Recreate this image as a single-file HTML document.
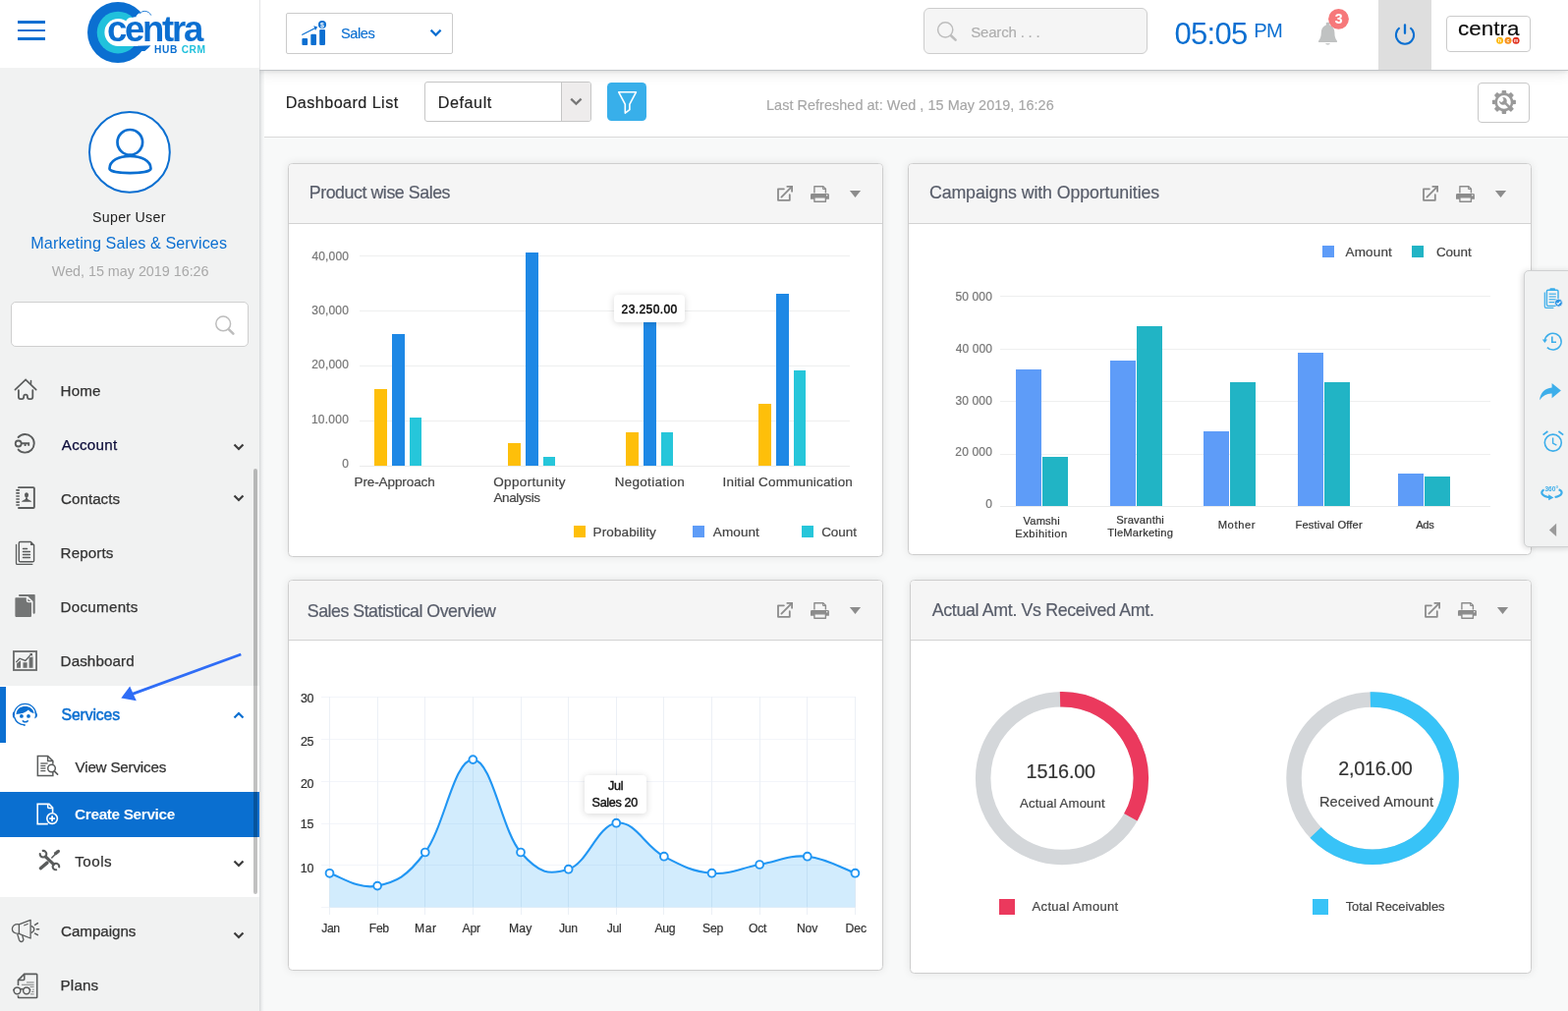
<!DOCTYPE html>
<html lang="en">
<head>
<meta charset="utf-8">
<title>CentraHub CRM - Dashboard</title>
<style>
html,body{margin:0;padding:0}
body{width:1596px;height:1029px;overflow:hidden;position:relative;background:#f8f9f9;font-family:"Liberation Sans",sans-serif}
.b,.t,.s{position:absolute;display:block}
.t{white-space:nowrap;line-height:1;margin:0;padding:0}
.s{overflow:visible}
#app{position:absolute;left:0;top:0;width:1596px;height:1029px;will-change:transform}
</style>
</head>
<body>
<div id="app">
<main id="content">
<section class="card" aria-label="Product wise Sales">
<div class="b" style="left:293px;top:166px;width:606px;height:401px;background:#fff;border:1px solid #cecece;border-radius:4.5px;box-sizing:border-box;box-shadow:0 0 8px rgba(0,0,0,.085)"></div>
<div class="b" style="left:294px;top:167px;width:604px;height:60px;background:#f5f5f5;border-bottom:1px solid #d3d3d3;border-radius:3.5px 3.5px 0 0"></div>
<div class="t" style="left:314.78px;top:188px;font-size:17.8px;color:#585d6a;letter-spacing:-0.44px;-webkit-text-stroke:.2px #585d6a;">Product wise Sales</div>
<svg class="s" style="left:786px;top:184px;" width="96" height="26" viewBox="786 184 96 26"><path d="M797.9 192.3 H792 V203.8 H803.8 V198.2" fill="none" stroke="#8c8c8c" stroke-width="1.8" stroke-linecap="round" stroke-linejoin="round"/><path d="M795.4 200.6 L805.8 190.2" fill="none" stroke="#8c8c8c" stroke-width="1.8" stroke-linecap="round"/><path d="M800.6 189.9 H806.1 V195.4" fill="none" stroke="#8c8c8c" stroke-width="1.8" stroke-linejoin="miter"/><path d="M828.9 196.6 V189.7 H837.8 L840.4 192.3 V196.6" fill="#f5f5f5" stroke="#8c8c8c" stroke-width="1.4" stroke-linejoin="round"/><path d="M837.6 189.9 V192.5 H840.2" fill="none" stroke="#8c8c8c" stroke-width="1"/><path d="M826.4 196.9 H842.5 Q843.9 196.9 843.9 198.3 V202.8 H825 V198.3 Q825 196.9 826.4 196.9 Z" fill="#8c8c8c"/><rect x="828.9" y="200.9" width="11.5" height="4.4" fill="#f5f5f5" stroke="#8c8c8c" stroke-width="1.4" stroke-linejoin="round"/><circle cx="841.7" cy="198.7" r=".75" fill="#f5f5f5"/><path d="M864.9 194 H876.1 L870.5 201.1 Z" fill="#8c8c8c"/></svg>
<svg class="s" style="left:300px;top:240px;" width="590" height="250" viewBox="300 240 590 250"><path d="M366 260.5 H865" stroke="#eeefef" stroke-width="1"/><path d="M366 316.5 H865" stroke="#eeefef" stroke-width="1"/><path d="M366 372.5 H865" stroke="#eeefef" stroke-width="1"/><path d="M366 428.5 H865" stroke="#eeefef" stroke-width="1"/><path d="M366 474.5 H865" stroke="#eaebeb" stroke-width="1"/><rect x="381" y="396" width="13" height="78" fill="#febf0a"/><rect x="399" y="340" width="13" height="134" fill="#1e88e5"/><rect x="417" y="425" width="12" height="49" fill="#26c6da"/><rect x="517" y="451" width="13" height="23" fill="#febf0a"/><rect x="535" y="257" width="13" height="217" fill="#1e88e5"/><rect x="553" y="465" width="12" height="9" fill="#26c6da"/><rect x="637" y="440" width="13" height="34" fill="#febf0a"/><rect x="655" y="322" width="13" height="152" fill="#1e88e5"/><rect x="673" y="440" width="12" height="34" fill="#26c6da"/><rect x="772" y="411" width="13" height="63" fill="#febf0a"/><rect x="790" y="299" width="13" height="175" fill="#1e88e5"/><rect x="808" y="377" width="12" height="97" fill="#26c6da"/></svg>
<div class="t" style="left:317.53px;top:255px;font-size:12px;color:#767676;letter-spacing:0.13px;-webkit-text-stroke:0.2px #767676;">40,000</div>
<div class="t" style="left:317.35px;top:310px;font-size:12px;color:#767676;letter-spacing:0.16px;-webkit-text-stroke:0.2px #767676;">30,000</div>
<div class="t" style="left:317.2px;top:365px;font-size:12px;color:#767676;letter-spacing:0.19px;-webkit-text-stroke:0.2px #767676;">20,000</div>
<div class="t" style="left:316.9px;top:421px;font-size:12px;color:#767676;letter-spacing:0.25px;-webkit-text-stroke:0.2px #767676;">10.000</div>
<div class="t" style="left:348.19px;top:466px;font-size:12px;color:#767676;-webkit-text-stroke:0.2px #767676;">0</div>
<div class="t" style="left:360.52px;top:484px;font-size:13.5px;color:#444;letter-spacing:-0.1px;-webkit-text-stroke:0.2px #444;">Pre-Approach</div>
<div class="t" style="left:502.19px;top:484px;font-size:13.5px;color:#444;letter-spacing:0.36px;-webkit-text-stroke:0.2px #444;">Opportunity</div>
<div class="t" style="left:502.48px;top:500px;font-size:13.5px;color:#444;letter-spacing:-0.38px;-webkit-text-stroke:0.2px #444;">Analysis</div>
<div class="t" style="left:625.72px;top:484px;font-size:13.5px;color:#444;letter-spacing:0.28px;-webkit-text-stroke:0.2px #444;">Negotiation</div>
<div class="t" style="left:735.59px;top:484px;font-size:13.5px;color:#444;letter-spacing:0.16px;-webkit-text-stroke:0.2px #444;">Initial Communication</div>
<div class="b" style="left:625px;top:300px;width:72px;height:28px;background:#fff;border-radius:4px;box-shadow:0 1px 7px rgba(0,0,0,.16)"></div>
<div class="t" style="left:632.6px;top:309px;font-size:12px;color:#050505;letter-spacing:0.41px;-webkit-text-stroke:.45px #050505;">23.250.00</div>
<div class="b" style="left:584px;top:535.2px;width:11.8px;height:11.8px;background:#febf0a"></div>
<div class="t" style="left:603.52px;top:535px;font-size:13.5px;color:#444;letter-spacing:0.12px;-webkit-text-stroke:0.2px #444;">Probability</div>
<div class="b" style="left:705px;top:535.2px;width:11.8px;height:11.8px;background:#5e9cf7"></div>
<div class="t" style="left:725.8px;top:535px;font-size:13.5px;color:#444;letter-spacing:0.11px;-webkit-text-stroke:0.2px #444;">Amount</div>
<div class="b" style="left:816px;top:535.2px;width:11.8px;height:11.8px;background:#26c6da"></div>
<div class="t" style="left:836.13px;top:535px;font-size:13.5px;color:#444;letter-spacing:-0.02px;-webkit-text-stroke:0.2px #444;">Count</div>
</section>
<section class="card" aria-label="Campaigns with Opportunities">
<div class="b" style="left:924px;top:166px;width:635px;height:399px;background:#fff;border:1px solid #cecece;border-radius:4.5px;box-sizing:border-box;box-shadow:0 0 8px rgba(0,0,0,.085)"></div>
<div class="b" style="left:925px;top:167px;width:633px;height:60px;background:#f5f5f5;border-bottom:1px solid #d3d3d3;border-radius:3.5px 3.5px 0 0"></div>
<div class="t" style="left:945.91px;top:188px;font-size:17.8px;color:#585d6a;letter-spacing:-0.11px;-webkit-text-stroke:.2px #585d6a;">Campaigns with Opportunities</div>
<svg class="s" style="left:1443px;top:184px;" width="96" height="26" viewBox="786 184 96 26"><path d="M797.9 192.3 H792 V203.8 H803.8 V198.2" fill="none" stroke="#8c8c8c" stroke-width="1.8" stroke-linecap="round" stroke-linejoin="round"/><path d="M795.4 200.6 L805.8 190.2" fill="none" stroke="#8c8c8c" stroke-width="1.8" stroke-linecap="round"/><path d="M800.6 189.9 H806.1 V195.4" fill="none" stroke="#8c8c8c" stroke-width="1.8" stroke-linejoin="miter"/><path d="M828.9 196.6 V189.7 H837.8 L840.4 192.3 V196.6" fill="#f5f5f5" stroke="#8c8c8c" stroke-width="1.4" stroke-linejoin="round"/><path d="M837.6 189.9 V192.5 H840.2" fill="none" stroke="#8c8c8c" stroke-width="1"/><path d="M826.4 196.9 H842.5 Q843.9 196.9 843.9 198.3 V202.8 H825 V198.3 Q825 196.9 826.4 196.9 Z" fill="#8c8c8c"/><rect x="828.9" y="200.9" width="11.5" height="4.4" fill="#f5f5f5" stroke="#8c8c8c" stroke-width="1.4" stroke-linejoin="round"/><circle cx="841.7" cy="198.7" r=".75" fill="#f5f5f5"/><path d="M864.9 194 H876.1 L870.5 201.1 Z" fill="#8c8c8c"/></svg>
<svg class="s" style="left:960px;top:280px;" width="580" height="250" viewBox="960 280 580 250"><path d="M1018 301.5 H1517" stroke="#eeefef" stroke-width="1"/><path d="M1018 355.5 H1517" stroke="#eeefef" stroke-width="1"/><path d="M1018 408.5 H1517" stroke="#eeefef" stroke-width="1"/><path d="M1018 462.5 H1517" stroke="#eeefef" stroke-width="1"/><path d="M1018 515.5 H1517" stroke="#eaebeb" stroke-width="1"/><rect x="1034" y="376" width="26" height="139" fill="#5e9cf8"/><rect x="1061" y="465" width="26" height="50" fill="#21b4c5"/><rect x="1130" y="367" width="26" height="148" fill="#5e9cf8"/><rect x="1157" y="332" width="26" height="183" fill="#21b4c5"/><rect x="1225" y="439" width="26" height="76" fill="#5e9cf8"/><rect x="1252" y="389" width="26" height="126" fill="#21b4c5"/><rect x="1321" y="359" width="26" height="156" fill="#5e9cf8"/><rect x="1348" y="389" width="26" height="126" fill="#21b4c5"/><rect x="1423" y="482" width="26" height="33" fill="#5e9cf8"/><rect x="1450" y="485" width="26" height="30" fill="#21b4c5"/></svg>
<div class="t" style="left:972.42px;top:296px;font-size:12px;color:#767676;letter-spacing:0.15px;-webkit-text-stroke:0.2px #767676;">50 000</div>
<div class="t" style="left:972.63px;top:349px;font-size:12px;color:#767676;letter-spacing:0.11px;-webkit-text-stroke:0.2px #767676;">40 000</div>
<div class="t" style="left:972.45px;top:402px;font-size:12px;color:#767676;letter-spacing:0.14px;-webkit-text-stroke:0.2px #767676;">30 000</div>
<div class="t" style="left:972.3px;top:454px;font-size:12px;color:#767676;letter-spacing:0.17px;-webkit-text-stroke:0.2px #767676;">20 000</div>
<div class="t" style="left:1003.19px;top:507px;font-size:12px;color:#767676;-webkit-text-stroke:0.2px #767676;">0</div>
<div class="t" style="left:1041.62px;top:525px;font-size:11.2px;color:#333;letter-spacing:0.11px;-webkit-text-stroke:0.2px #333;">Vamshi</div>
<div class="t" style="left:1033.2px;top:538px;font-size:11.2px;color:#333;letter-spacing:0.49px;-webkit-text-stroke:0.2px #333;">Exbihition</div>
<div class="t" style="left:1136.2px;top:524px;font-size:11.2px;color:#333;letter-spacing:0.17px;-webkit-text-stroke:0.2px #333;">Sravanthi</div>
<div class="t" style="left:1127.28px;top:537px;font-size:11.2px;color:#333;letter-spacing:0.18px;-webkit-text-stroke:0.2px #333;">TleMarketing</div>
<div class="t" style="left:1239.7px;top:529px;font-size:11.2px;color:#333;letter-spacing:0.6px;-webkit-text-stroke:0.2px #333;">Mother</div>
<div class="t" style="left:1318.45px;top:529px;font-size:11.2px;color:#333;letter-spacing:0.15px;-webkit-text-stroke:0.2px #333;">Festival Offer</div>
<div class="t" style="left:1441.15px;top:529px;font-size:11.2px;color:#333;letter-spacing:-0.3px;-webkit-text-stroke:0.2px #333;">Ads</div>
<div class="b" style="left:1346px;top:250.3px;width:11.8px;height:11.8px;background:#5e9cf8"></div>
<div class="t" style="left:1369.6px;top:250px;font-size:13.5px;color:#444;letter-spacing:0.13px;-webkit-text-stroke:0.2px #444;">Amount</div>
<div class="b" style="left:1437px;top:250.3px;width:11.8px;height:11.8px;background:#21b4c5"></div>
<div class="t" style="left:1461.92px;top:250px;font-size:13.5px;color:#444;letter-spacing:-0.04px;-webkit-text-stroke:0.2px #444;">Count</div>
</section>
<section class="card" aria-label="Sales Statistical Overview">
<div class="b" style="left:293px;top:590px;width:606px;height:398px;background:#fff;border:1px solid #cecece;border-radius:4.5px;box-sizing:border-box;box-shadow:0 0 8px rgba(0,0,0,.085)"></div>
<div class="b" style="left:294px;top:591px;width:604px;height:60px;background:#f5f5f5;border-bottom:1px solid #d3d3d3;border-radius:3.5px 3.5px 0 0"></div>
<div class="t" style="left:312.86px;top:614px;font-size:17.8px;color:#585d6a;letter-spacing:-0.5px;-webkit-text-stroke:.2px #585d6a;">Sales Statistical Overview</div>
<svg class="s" style="left:786px;top:608.3px;" width="96" height="26" viewBox="786 184 96 26"><path d="M797.9 192.3 H792 V203.8 H803.8 V198.2" fill="none" stroke="#8c8c8c" stroke-width="1.8" stroke-linecap="round" stroke-linejoin="round"/><path d="M795.4 200.6 L805.8 190.2" fill="none" stroke="#8c8c8c" stroke-width="1.8" stroke-linecap="round"/><path d="M800.6 189.9 H806.1 V195.4" fill="none" stroke="#8c8c8c" stroke-width="1.8" stroke-linejoin="miter"/><path d="M828.9 196.6 V189.7 H837.8 L840.4 192.3 V196.6" fill="#f5f5f5" stroke="#8c8c8c" stroke-width="1.4" stroke-linejoin="round"/><path d="M837.6 189.9 V192.5 H840.2" fill="none" stroke="#8c8c8c" stroke-width="1"/><path d="M826.4 196.9 H842.5 Q843.9 196.9 843.9 198.3 V202.8 H825 V198.3 Q825 196.9 826.4 196.9 Z" fill="#8c8c8c"/><rect x="828.9" y="200.9" width="11.5" height="4.4" fill="#f5f5f5" stroke="#8c8c8c" stroke-width="1.4" stroke-linejoin="round"/><circle cx="841.7" cy="198.7" r=".75" fill="#f5f5f5"/><path d="M864.9 194 H876.1 L870.5 201.1 Z" fill="#8c8c8c"/></svg>
<svg class="s" style="left:300px;top:700px;" width="590" height="240" viewBox="300 700 590 240"><path d="M327 709.5 H871" stroke="#f3f5fa" stroke-width="1"/><path d="M327 752.5 H871" stroke="#f3f5fa" stroke-width="1"/><path d="M327 795.5 H871" stroke="#f3f5fa" stroke-width="1"/><path d="M327 838.5 H871" stroke="#f3f5fa" stroke-width="1"/><path d="M327 880.5 H871" stroke="#f3f5fa" stroke-width="1"/><path d="M327 923.5 H871" stroke="#f3f5fa" stroke-width="1"/><path d="M335.5 709 V931" stroke="#ecf0f6" stroke-width="1"/><path d="M384.5 709 V931" stroke="#ecf0f6" stroke-width="1"/><path d="M432.5 709 V931" stroke="#ecf0f6" stroke-width="1"/><path d="M481.5 709 V931" stroke="#ecf0f6" stroke-width="1"/><path d="M530.5 709 V931" stroke="#ecf0f6" stroke-width="1"/><path d="M578.5 709 V931" stroke="#ecf0f6" stroke-width="1"/><path d="M627.5 709 V931" stroke="#ecf0f6" stroke-width="1"/><path d="M675.5 709 V931" stroke="#ecf0f6" stroke-width="1"/><path d="M724.5 709 V931" stroke="#ecf0f6" stroke-width="1"/><path d="M773.5 709 V931" stroke="#ecf0f6" stroke-width="1"/><path d="M821.5 709 V931" stroke="#ecf0f6" stroke-width="1"/><path d="M870.5 709 V931" stroke="#ecf0f6" stroke-width="1"/><path d="M335.5 888.8 C345.23 891.36 364.68 905.86 384.13 901.6 C403.58 897.34 413.31 893.2 432.76 867.5 C452.21 841.8 461.94 773.1 481.39 773.1 C500.84 773.1 510.57 845.18 530.02 867.5 C549.47 889.82 559.2 890.66 578.65 884.7 C598.1 878.74 607.83 840.3 627.28 837.7 C646.73 835.1 656.46 861.5 675.91 871.7 C695.36 881.9 705.09 887.04 724.54 888.7 C743.99 890.36 753.72 883.4 773.17 880 C792.62 876.6 802.35 869.96 821.8 871.7 C841.25 873.44 860.7 885.3 870.43 888.7 L870.43 923.4 L335.5 923.4 Z" fill="#1ea0f5" fill-opacity=".2"/><path d="M335.5 888.8 C345.23 891.36 364.68 905.86 384.13 901.6 C403.58 897.34 413.31 893.2 432.76 867.5 C452.21 841.8 461.94 773.1 481.39 773.1 C500.84 773.1 510.57 845.18 530.02 867.5 C549.47 889.82 559.2 890.66 578.65 884.7 C598.1 878.74 607.83 840.3 627.28 837.7 C646.73 835.1 656.46 861.5 675.91 871.7 C695.36 881.9 705.09 887.04 724.54 888.7 C743.99 890.36 753.72 883.4 773.17 880 C792.62 876.6 802.35 869.96 821.8 871.7 C841.25 873.44 860.7 885.3 870.43 888.7" fill="none" stroke="#2196f3" stroke-width="2.1"/><circle cx="335.5" cy="888.8" r="3.9" fill="#fff" stroke="#2196f3" stroke-width="1.9"/><circle cx="384.13" cy="901.6" r="3.9" fill="#fff" stroke="#2196f3" stroke-width="1.9"/><circle cx="432.76" cy="867.5" r="3.9" fill="#fff" stroke="#2196f3" stroke-width="1.9"/><circle cx="481.39" cy="773.1" r="3.9" fill="#fff" stroke="#2196f3" stroke-width="1.9"/><circle cx="530.02" cy="867.5" r="3.9" fill="#fff" stroke="#2196f3" stroke-width="1.9"/><circle cx="578.65" cy="884.7" r="3.9" fill="#fff" stroke="#2196f3" stroke-width="1.9"/><circle cx="627.28" cy="837.7" r="3.9" fill="#fff" stroke="#2196f3" stroke-width="1.9"/><circle cx="675.91" cy="871.7" r="3.9" fill="#fff" stroke="#2196f3" stroke-width="1.9"/><circle cx="724.54" cy="888.7" r="3.9" fill="#fff" stroke="#2196f3" stroke-width="1.9"/><circle cx="773.17" cy="880" r="3.9" fill="#fff" stroke="#2196f3" stroke-width="1.9"/><circle cx="821.8" cy="871.7" r="3.9" fill="#fff" stroke="#2196f3" stroke-width="1.9"/><circle cx="870.43" cy="888.7" r="3.9" fill="#fff" stroke="#2196f3" stroke-width="1.9"/></svg>
<div class="t" style="left:305.94px;top:705px;font-size:12.5px;color:#333;letter-spacing:-0.35px;-webkit-text-stroke:0.2px #333;">30</div>
<div class="t" style="left:305.98px;top:749px;font-size:12.5px;color:#333;letter-spacing:-0.35px;-webkit-text-stroke:0.2px #333;">25</div>
<div class="t" style="left:305.94px;top:792px;font-size:12.5px;color:#333;letter-spacing:-0.35px;-webkit-text-stroke:0.2px #333;">20</div>
<div class="t" style="left:305.76px;top:833px;font-size:12.5px;color:#333;letter-spacing:-0.14px;-webkit-text-stroke:0.2px #333;">15</div>
<div class="t" style="left:305.76px;top:878px;font-size:12.5px;color:#333;letter-spacing:-0.17px;-webkit-text-stroke:0.2px #333;">10</div>
<div class="t" style="left:327.16px;top:939px;font-size:12.2px;color:#333;letter-spacing:-0.34px;-webkit-text-stroke:0.2px #333;">Jan</div>
<div class="t" style="left:375.84px;top:939px;font-size:12.2px;color:#333;letter-spacing:-0.34px;-webkit-text-stroke:0.2px #333;">Feb</div>
<div class="t" style="left:422.02px;top:939px;font-size:12.2px;color:#333;letter-spacing:0.52px;-webkit-text-stroke:0.2px #333;">Mar</div>
<div class="t" style="left:470.6px;top:939px;font-size:12.2px;color:#333;letter-spacing:-0.19px;-webkit-text-stroke:0.2px #333;">Apr</div>
<div class="t" style="left:517.92px;top:939px;font-size:12.2px;color:#333;letter-spacing:0.21px;-webkit-text-stroke:0.2px #333;">May</div>
<div class="t" style="left:569.11px;top:939px;font-size:12.2px;color:#333;letter-spacing:-0.34px;-webkit-text-stroke:0.2px #333;">Jun</div>
<div class="t" style="left:617.85px;top:939px;font-size:12.2px;color:#333;letter-spacing:-0.34px;-webkit-text-stroke:0.2px #333;">Jul</div>
<div class="t" style="left:666.53px;top:939px;font-size:12.2px;color:#333;letter-spacing:-0.34px;-webkit-text-stroke:0.2px #333;">Aug</div>
<div class="t" style="left:715.05px;top:939px;font-size:12.2px;color:#333;letter-spacing:-0.27px;-webkit-text-stroke:0.2px #333;">Sep</div>
<div class="t" style="left:762.05px;top:939px;font-size:12.2px;color:#333;letter-spacing:-0.28px;-webkit-text-stroke:0.2px #333;">Oct</div>
<div class="t" style="left:810.92px;top:939px;font-size:12.2px;color:#333;letter-spacing:-0.09px;-webkit-text-stroke:0.2px #333;">Nov</div>
<div class="t" style="left:860.62px;top:939px;font-size:12.2px;color:#333;letter-spacing:-0.15px;-webkit-text-stroke:0.2px #333;">Dec</div>
<div class="b" style="left:595px;top:789.3px;width:63px;height:38.4px;background:#fff;border-radius:4px;box-shadow:0 1px 7px rgba(0,0,0,.16)"></div>
<div class="t" style="left:619.01px;top:794px;font-size:12.6px;color:#111;letter-spacing:-0.29px;-webkit-text-stroke:.4px #111;">Jul</div>
<div class="t" style="left:602.58px;top:811px;font-size:12.6px;color:#111;letter-spacing:-0.35px;-webkit-text-stroke:.4px #111;">Sales 20</div>
</section>
<section class="card" aria-label="Actual Amt. Vs Received Amt.">
<div class="b" style="left:926px;top:590px;width:633px;height:401px;background:#fff;border:1px solid #cecece;border-radius:4.5px;box-sizing:border-box;box-shadow:0 0 8px rgba(0,0,0,.085)"></div>
<div class="b" style="left:927px;top:591px;width:631px;height:60px;background:#f5f5f5;border-bottom:1px solid #d3d3d3;border-radius:3.5px 3.5px 0 0"></div>
<div class="t" style="left:948.8px;top:613px;font-size:17.8px;color:#585d6a;letter-spacing:-0.34px;-webkit-text-stroke:.2px #585d6a;">Actual Amt. Vs Received Amt.</div>
<svg class="s" style="left:1445px;top:608px;" width="96" height="26" viewBox="786 184 96 26"><path d="M797.9 192.3 H792 V203.8 H803.8 V198.2" fill="none" stroke="#8c8c8c" stroke-width="1.8" stroke-linecap="round" stroke-linejoin="round"/><path d="M795.4 200.6 L805.8 190.2" fill="none" stroke="#8c8c8c" stroke-width="1.8" stroke-linecap="round"/><path d="M800.6 189.9 H806.1 V195.4" fill="none" stroke="#8c8c8c" stroke-width="1.8" stroke-linejoin="miter"/><path d="M828.9 196.6 V189.7 H837.8 L840.4 192.3 V196.6" fill="#f5f5f5" stroke="#8c8c8c" stroke-width="1.4" stroke-linejoin="round"/><path d="M837.6 189.9 V192.5 H840.2" fill="none" stroke="#8c8c8c" stroke-width="1"/><path d="M826.4 196.9 H842.5 Q843.9 196.9 843.9 198.3 V202.8 H825 V198.3 Q825 196.9 826.4 196.9 Z" fill="#8c8c8c"/><rect x="828.9" y="200.9" width="11.5" height="4.4" fill="#f5f5f5" stroke="#8c8c8c" stroke-width="1.4" stroke-linejoin="round"/><circle cx="841.7" cy="198.7" r=".75" fill="#f5f5f5"/><path d="M864.9 194 H876.1 L870.5 201.1 Z" fill="#8c8c8c"/></svg>
<svg class="s" style="left:980px;top:695px;" width="520" height="195" viewBox="980 695 520 195"><circle cx="1081" cy="792.1" r="80.35" fill="none" stroke="#d4d7da" stroke-width="15.5"/><path d="M1079.04 711.77 A80.35 80.35 0 0 1 1150.86 831.79" fill="none" stroke="#eb395d" stroke-width="15.5"/><circle cx="1397.1" cy="792.1" r="80.1" fill="none" stroke="#d4d7da" stroke-width="15.5"/><path d="M1394.86 712.03 A80.1 80.1 0 1 1 1339.09 847.34" fill="none" stroke="#38c3f7" stroke-width="15.5"/></svg>
<div class="t" style="left:1044.62px;top:776px;font-size:19.8px;color:#333;letter-spacing:-0.18px;-webkit-text-stroke:0.2px #333;">1516.00</div>
<div class="t" style="left:1038px;top:811px;font-size:13.2px;color:#444;letter-spacing:0.14px;-webkit-text-stroke:0.2px #444;">Actual Amount</div>
<div class="t" style="left:1362.21px;top:773px;font-size:19.8px;color:#333;letter-spacing:-0.22px;-webkit-text-stroke:0.2px #333;">2,016.00</div>
<div class="t" style="left:1342.93px;top:809px;font-size:14.6px;color:#444;letter-spacing:0.13px;-webkit-text-stroke:0.2px #444;">Received Amount</div>
<div class="b" style="left:1017px;top:915.3px;width:15.8px;height:15.8px;background:#eb395d"></div>
<div class="t" style="left:1050.6px;top:916px;font-size:13px;color:#444;letter-spacing:0.31px;-webkit-text-stroke:0.2px #444;">Actual Amount</div>
<div class="b" style="left:1336.3px;top:915.3px;width:15.8px;height:15.8px;background:#38c3f7"></div>
<div class="t" style="left:1369.64px;top:916px;font-size:13px;color:#444;letter-spacing:-0.06px;-webkit-text-stroke:0.2px #444;">Total Receivables</div>
</section>
<nav class="quick" aria-label="Quick actions">
<div class="b" style="left:1551px;top:275px;width:50px;height:282px;background:#f1f2f2;border:1px solid #d0d1d2;border-radius:5px;box-sizing:border-box;box-shadow:-1px 1px 6px rgba(0,0,0,.16)"></div>
<svg class="s" style="left:1560px;top:285px;" width="36" height="268" viewBox="1560 285 36 268"><rect x="1574.4" y="295.2" width="11.6" height="16.2" rx="1.3" fill="none" stroke="#3daeea" stroke-width="1.4"/><path d="M1572.3 297.4 V312 Q1572.3 313.4 1573.7 313.4 H1581.4" fill="none" stroke="#3daeea" stroke-width="1.2"/><rect x="1577.4" y="293.2" width="5.6" height="2.6" rx="1" fill="#3daeea"/><path d="M1576.6 299.2 H1583.8" stroke="#3daeea" stroke-width="1.2"/><path d="M1576.6 302 H1583.8" stroke="#3daeea" stroke-width="1.2"/><path d="M1576.6 304.8 H1583.8" stroke="#3daeea" stroke-width="1.2"/><path d="M1576.6 307.6 H1583.8" stroke="#3daeea" stroke-width="1.2"/><circle cx="1586.4" cy="308.2" r="4" fill="#2f95e4" stroke="#f1f2f2" stroke-width=".8"/><path d="M1584.5 308.3 L1585.9 309.7 L1588.4 306.9" fill="none" stroke="#fff" stroke-width="1.1"/><path d="M1572.4 346.6 A8.4 8.4 0 1 1 1574.8 353.6" fill="none" stroke="#3daeea" stroke-width="1.5"/><path d="M1569.8 345.6 H1575 L1572.4 349 Z" fill="#3daeea"/><path d="M1579.8 342.6 V348.2 H1584" fill="none" stroke="#3daeea" stroke-width="1.6"/><path d="M1579.6 390 L1588.9 397.4 L1579.6 405.2 V400.6 C1574.6 400.4 1570.4 402.6 1567.1 407.2 C1567.8 400 1572.4 395.2 1579.6 394.6 Z" fill="#3daeea"/><circle cx="1580.8" cy="450.6" r="8.5" fill="none" stroke="#3daeea" stroke-width="1.6"/><path d="M1580.6 445.4 V451 L1584.4 453.2" fill="none" stroke="#3daeea" stroke-width="1.4"/><path d="M1570.6 442.6 L1575.4 439 M1586.4 439 L1591.2 442.6" fill="none" stroke="#3daeea" stroke-width="1.8"/><path d="M1571.6 498.4 C1567 501 1569.4 505 1577.4 506.2 M1586.6 498.2 C1592 500.4 1589.8 504.6 1582.6 506" fill="none" stroke="#3daeea" stroke-width="2.2"/><path d="M1576.2 503.2 L1581.4 506.4 L1576.2 509.2 Z" fill="#3daeea"/><text x="1579.2" y="500.4" font-size="6.6" font-weight="700" fill="#3daeea" text-anchor="middle" font-family="Liberation Sans,sans-serif">360°</text><path d="M1584.1 532.7 V546 L1576.9 539.4 Z" fill="#9a9a9a"/></svg>
</nav>
</main>
<header id="topbar">
<div class="b" style="left:269px;top:71px;width:1327px;height:68.3px;background:#fff;border-bottom:1px solid #dadada"></div>
<div class="b" style="left:264px;top:72px;width:5px;height:957px;background:linear-gradient(90deg,rgba(110,118,126,.26),rgba(110,118,126,.16) 22%,rgba(120,128,136,.05) 60%,rgba(120,128,136,0))"></div>
<div class="b" style="left:264.4px;top:0px;width:1332px;height:71px;background:#fff;border-bottom:1px solid #c1c4c7;box-shadow:0 1px 4px rgba(0,0,0,.09),0 4px 12px rgba(0,0,0,.08)"></div>
<div class="b" style="left:1403.2px;top:0px;width:53.7px;height:71px;background:#dedede"></div>
<div class="b" style="left:291px;top:13px;width:170px;height:42px;background:#fff;border:1px solid #cbcbcb;border-radius:2px;box-sizing:border-box"></div>
<svg class="s" style="left:296px;top:10px;" width="60" height="48" viewBox="0 0 60 48"><rect x="11.4" y="28.9" width="5.7" height="7" rx="1" fill="#0b6fd1"/><rect x="20.3" y="24.7" width="5.7" height="11.2" rx="1" fill="#0b6fd1"/><rect x="29.2" y="20.1" width="5.8" height="15.8" rx="1.2" fill="#0b6fd1"/><path d="M11.3 25.5 L25 18.5" stroke="#0b6fd1" stroke-width="1.2" fill="none"/><path d="M23.3 16.3 L27.2 17.4 L25 20.9 Z" fill="#0b6fd1"/><circle cx="32" cy="15" r="4" fill="#0b6fd1"/><text x="32" y="17.6" font-size="7" font-weight="700" fill="#fff" text-anchor="middle" font-family="Liberation Sans,sans-serif">$</text></svg>
<div class="t" style="left:346.93px;top:27px;font-size:14.6px;color:#0b6fd1;letter-spacing:-0.41px;-webkit-text-stroke:0.15px #0b6fd1;">Sales</div>
<svg class="s" style="left:436px;top:27px;" width="16" height="14" viewBox="0 0 16 14"><path d="M2.6 3.6 L7.6 8.6 L12.6 3.6" fill="none" stroke="#0b6fd1" stroke-width="2.2"/></svg>
<div class="b" style="left:940px;top:8px;width:228px;height:47px;background:#f5f5f5;border:1px solid #cdcdcd;border-radius:6px;box-sizing:border-box"></div>
<svg class="s" style="left:950px;top:18px;" width="28" height="28" viewBox="0 0 28 28"><circle cx="12.2" cy="12.3" r="7.6" fill="none" stroke="#bdbdbd" stroke-width="1.5"/><path d="M18.2 18.5 L22.6 22.6" stroke="#bdbdbd" stroke-width="2.6" stroke-linecap="round"/></svg>
<div class="t" style="left:988.13px;top:25px;font-size:15px;color:#adadad;letter-spacing:-0.17px;-webkit-text-stroke:0.15px #adadad;">Search . . .</div>
<div class="t" style="left:1195.44px;top:19px;font-size:31px;color:#0b6fd1;letter-spacing:-0.67px;">05:05</div>
<div class="t" style="left:1276.18px;top:21px;font-size:20.2px;color:#0b6fd1;letter-spacing:-0.57px;">PM</div>
<svg class="s" style="left:1330px;top:5px;" width="60" height="60" viewBox="0 0 60 60"><path d="M19.8 18.1 Q21.6 17.2 23.4 18.1 L23.4 20.4 C26.8 21.6 28.4 24.6 28.4 28 C28.4 32.4 29.2 34.4 30.9 36.6 L30.9 37.9 H12.1 L12.1 36.6 C13.8 34.4 14.8 32.4 14.8 28 C14.8 24.6 16.4 21.6 19.8 20.4 Z" fill="#c0c2c2"/><path d="M19 39 H24 Q23.4 40.8 21.5 40.8 Q19.6 40.8 19 39 Z" fill="#c9cbcb"/><circle cx="32.5" cy="14.3" r="10.4" fill="#f6787a"/></svg>
<div class="t" style="left:1358.68px;top:12px;font-size:14px;color:#fff;font-weight:700;-webkit-text-stroke:0.15px #fff;">3</div>
<svg class="s" style="left:1410px;top:15px;" width="40" height="40" viewBox="0 0 40 40"><path d="M14.6 13.3 A9.1 9.1 0 1 0 25.4 13.3" fill="none" stroke="#0b6fd1" stroke-width="2"/><path d="M20 10.5 V18.8" stroke="#0b6fd1" stroke-width="2.3" stroke-linecap="round"/></svg>
<div class="b" style="left:1472px;top:16px;width:86px;height:37px;background:#fff;border:1px solid #cbcbcb;border-radius:4px;box-sizing:border-box"></div>
<div class="t" style="left:1483.95px;top:19px;font-size:20.4px;color:#0a0a0a;letter-spacing:0.01px;-webkit-text-stroke:0.15px #0a0a0a;transform:scaleX(1.1);transform-origin:0 0;">centra</div>
<svg class="s" style="left:1520px;top:36px;" width="30" height="11" viewBox="0 0 30 11"><circle cx="6.6" cy="5.2" r="3.5" fill="#fdb913"/><circle cx="15" cy="5.2" r="3.5" fill="#f7901e"/><circle cx="23.1" cy="5.2" r="3.5" fill="#e0301e"/><text x="6.6" y="7" font-size="5" font-weight="700" fill="#fff" text-anchor="middle" font-family="Liberation Sans,sans-serif">h</text><text x="15" y="7" font-size="5" font-weight="700" fill="#fff" text-anchor="middle" font-family="Liberation Sans,sans-serif">c</text><text x="23.1" y="6.8" font-size="4.6" font-weight="700" fill="#fff" text-anchor="middle" font-family="Liberation Sans,sans-serif">m</text></svg>
<div class="t" style="left:290.7px;top:96px;font-size:16.2px;color:#222;letter-spacing:0.43px;-webkit-text-stroke:0.15px #222;">Dashboard List</div>
<div class="b" style="left:432px;top:83px;width:170px;height:41px;background:#fff;border:1px solid #c6c6c6;border-radius:3px;box-sizing:border-box"></div>
<div class="b" style="left:571px;top:84px;width:30px;height:39px;background:#eeecec;border-left:1px solid #c6c6c6;border-radius:0 2px 2px 0;box-sizing:border-box"></div>
<div class="t" style="left:445.8px;top:96px;font-size:16.2px;color:#222;letter-spacing:0.53px;-webkit-text-stroke:0.15px #222;">Default</div>
<svg class="s" style="left:578px;top:96px;" width="16" height="14" viewBox="0 0 16 14"><path d="M3.2 4.6 L8.4 9.6 L13.6 4.6" fill="none" stroke="#777" stroke-width="2.2"/></svg>
<div class="b" style="left:618px;top:84px;width:40px;height:39px;background:#38afea;border-radius:4.5px"></div>
<svg class="s" style="left:618px;top:84px;" width="40" height="39" viewBox="0 0 40 39"><path d="M11.8 9.8 H29.4 L22.9 22.1 V27.7 L18.3 31.1 V22.1 Z" fill="none" stroke="#fff" stroke-width="1.6" stroke-linejoin="round"/></svg>
<div class="t" style="left:780.05px;top:100px;font-size:14.4px;color:#a6a6a6;letter-spacing:0.06px;-webkit-text-stroke:0.15px #a6a6a6;">Last Refreshed at: Wed , 15 May 2019, 16:26</div>
<div class="b" style="left:1504px;top:84px;width:53px;height:41px;background:#fff;border:1px solid #c8c8c8;border-radius:4px;box-sizing:border-box"></div>
<svg class="s" style="left:1500px;top:78px;" width="62" height="52" viewBox="0 0 62 52"><path d="M29.2 17.16 L29.38 14.6 L32.42 14.6 L32.6 17.16 L35.87 18.52 L37.82 16.84 L39.96 18.98 L38.28 20.93 L39.64 24.2 L42.2 24.38 L42.2 27.42 L39.64 27.6 L38.28 30.87 L39.96 32.82 L37.82 34.96 L35.87 33.28 L32.6 34.64 L32.42 37.2 L29.38 37.2 L29.2 34.64 L25.93 33.28 L23.98 34.96 L21.84 32.82 L23.52 30.87 L22.16 27.6 L19.6 27.42 L19.6 24.38 L22.16 24.2 L23.52 20.93 L21.84 18.98 L23.98 16.84 L25.93 18.52 Z" fill="#999" stroke="#999" stroke-width="1.4" stroke-linejoin="round"/><circle cx="30.9" cy="25.9" r="6.9" fill="#fff"/><path d="M29 21 A3.9 3.9 0 1 1 26 24.4 L28.2 26.2 L30.4 24.4 L30.2 22.2 Z" fill="#999"/><path d="M31.6 26.4 L37 31.6" stroke="#999" stroke-width="2.6"/></svg>
</header>
<aside id="sidebar">
<div class="b" style="left:0px;top:0px;width:264px;height:1029px;background:#f1f2f2"></div>
<div class="b" style="left:0px;top:0px;width:264px;height:68.7px;background:#fff"></div>
<div class="b" style="left:0px;top:698px;width:264px;height:214.7px;background:#fff"></div>
<div class="b" style="left:0px;top:698.6px;width:5.9px;height:57.2px;background:#0b6fd1"></div>
<div class="b" style="left:0px;top:806px;width:264px;height:46px;background:#0a6fd0"></div>
<div class="b" style="left:18px;top:21.1px;width:28px;height:2.7px;background:#0b6fd1"></div>
<div class="b" style="left:18px;top:29.5px;width:28px;height:2.7px;background:#0b6fd1"></div>
<div class="b" style="left:18px;top:38px;width:28px;height:2.7px;background:#0b6fd1"></div>
<svg class="s" style="left:84px;top:0px;" width="130" height="68" viewBox="84 0 130 68"><circle cx="120" cy="33" r="31" fill="#0b6fd1"/><circle cx="120.1" cy="33.1" r="21.4" fill="#21c1dc"/><circle cx="120.4" cy="33" r="14" fill="#fff"/><path d="M120 19 L128 22.4 C128.6 19.6 131.4 17.4 134.6 17.9 C135.8 17.4 137 17.2 138.2 17.4 C138.8 16 139.8 14.6 141.6 13.6 L142.6 13 C143.6 11.6 145.6 11 147.4 11.1 C150.4 11.3 152.8 12.9 153.9 15.3 L160 15 L160 46.9 L120 46.9 Z" fill="#fff"/><path d="M140 46.8 L153.5 46.3 Q151.2 49 147.4 52 L140 52 Z" fill="#0b6fd1"/><path d="M142.3 14.2 C143.4 12.2 145.4 11.3 147.4 11.4 C150.2 11.5 152.6 13 153.8 15.6" fill="none" stroke="#0b6fd1" stroke-width=".9"/></svg><div class="t" style="left:108.9px;top:11.6px;font-size:36.5px;font-weight:700;color:#0b6fd1;letter-spacing:-2.25px">centra</div><div class="t" style="left:156.98px;top:46px;font-size:10.2px;color:#0b6fd1;letter-spacing:0.61px;font-weight:700;">HUB</div><div class="t" style="left:184.79px;top:46px;font-size:10.2px;color:#21c1dc;letter-spacing:0.47px;font-weight:700;">CRM</div>
<svg class="s" style="left:82px;top:105px;" width="100" height="100" viewBox="0 0 100 100"><circle cx="49.9" cy="49.9" r="40.9" fill="#fff" stroke="#0b6fd1" stroke-width="2"/><circle cx="50.3" cy="39.8" r="12.8" fill="none" stroke="#0b6fd1" stroke-width="2.7"/><path d="M29.5 66.6 C29.5 58.5 39 53.8 50.3 53.8 C61.6 53.8 71.5 58.5 71.5 66.6 C71.5 69.6 61 71.2 50.3 71.2 C39.6 71.2 29.5 69.6 29.5 66.6 Z" fill="none" stroke="#0b6fd1" stroke-width="2.7"/></svg>
<div class="t" style="left:94.06px;top:214px;font-size:14.2px;color:#222;letter-spacing:0.29px;">Super User</div>
<div class="t" style="left:31.3px;top:239px;font-size:16.2px;color:#0b6fd1;letter-spacing:0.07px;">Marketing Sales &amp; Services</div>
<div class="t" style="left:52.86px;top:269px;font-size:14.4px;color:#a9a9a9;letter-spacing:-0.04px;">Wed, 15 may 2019 16:26</div>
<div class="b" style="left:11px;top:307px;width:242px;height:46px;background:#fff;border:1px solid #cfcfcf;border-radius:5px;box-sizing:border-box"></div>
<svg class="s" style="left:216px;top:318px;" width="26" height="26" viewBox="0 0 26 26"><circle cx="11.2" cy="11.4" r="7.4" fill="none" stroke="#bdbdbd" stroke-width="1.5"/><path d="M17 17.4 L21.4 21.6" stroke="#bdbdbd" stroke-width="2.6" stroke-linecap="round"/></svg>
<div class="t" style="left:61.58px;top:390px;font-size:15.2px;color:#333;letter-spacing:0.14px;-webkit-text-stroke:0.25px #333;">Home</div>
<div class="t" style="left:62.8px;top:445px;font-size:15.2px;color:#0c0c3a;letter-spacing:0.24px;-webkit-text-stroke:0.25px #0c0c3a;">Account</div>
<div class="t" style="left:62.04px;top:500px;font-size:15.2px;color:#333;letter-spacing:0.01px;-webkit-text-stroke:0.25px #333;">Contacts</div>
<div class="t" style="left:61.58px;top:555px;font-size:15.2px;color:#333;letter-spacing:0.09px;-webkit-text-stroke:0.25px #333;">Reports</div>
<div class="t" style="left:61.58px;top:610px;font-size:15.2px;color:#333;letter-spacing:0.25px;-webkit-text-stroke:0.25px #333;">Documents</div>
<div class="t" style="left:61.58px;top:665px;font-size:15.2px;color:#333;letter-spacing:0.09px;-webkit-text-stroke:0.25px #333;">Dashboard</div>
<div class="t" style="left:62.04px;top:940px;font-size:15.2px;color:#333;letter-spacing:-0.06px;-webkit-text-stroke:0.25px #333;">Campaigns</div>
<div class="t" style="left:61.58px;top:995px;font-size:15.2px;color:#333;letter-spacing:0.15px;-webkit-text-stroke:0.25px #333;">Plans</div>
<div class="t" style="left:62.49px;top:720px;font-size:15.8px;color:#0b6fd1;letter-spacing:-0.13px;-webkit-text-stroke:.5px #0b6fd1;">Services</div>
<div class="t" style="left:76.56px;top:773px;font-size:15.2px;color:#333;letter-spacing:-0.2px;-webkit-text-stroke:0.25px #333;">View Services</div>
<div class="t" style="left:76.08px;top:821px;font-size:15.4px;color:#fff;letter-spacing:-0.37px;font-weight:700;">Create Service</div>
<div class="t" style="left:76.3px;top:869px;font-size:15.2px;color:#333;letter-spacing:0.46px;-webkit-text-stroke:0.25px #333;">Tools</div>
<svg class="s" style="left:237.2px;top:450.2px;" width="12" height="10" viewBox="0 0 12 10"><path d="M1.5 2.5 L6 7 L10.5 2.5" fill="none" stroke="#3c3c3c" stroke-width="2.2"/></svg>
<svg class="s" style="left:237.2px;top:502px;" width="12" height="10" viewBox="0 0 12 10"><path d="M1.5 2.5 L6 7 L10.5 2.5" fill="none" stroke="#3c3c3c" stroke-width="2.2"/></svg>
<svg class="s" style="left:237.2px;top:723px;" width="12" height="10" viewBox="0 0 12 10"><path d="M1.5 7.5 L6 3 L10.5 7.5" fill="none" stroke="#0b6fd1" stroke-width="2.2"/></svg>
<svg class="s" style="left:237.2px;top:874.2px;" width="12" height="10" viewBox="0 0 12 10"><path d="M1.5 2.5 L6 7 L10.5 2.5" fill="none" stroke="#3c3c3c" stroke-width="2.2"/></svg>
<svg class="s" style="left:237.2px;top:947px;" width="12" height="10" viewBox="0 0 12 10"><path d="M1.5 2.5 L6 7 L10.5 2.5" fill="none" stroke="#3c3c3c" stroke-width="2.2"/></svg>
<svg class="s" style="left:8px;top:378px;" width="40" height="40" viewBox="0 0 40 40"><path d="M7.4 18.6 L18.1 8.5 L28.7 18.6" fill="none" stroke="#5a5c5c" stroke-width="1.7" stroke-linecap="round" stroke-linejoin="miter"/><path d="M23.5 9.6 V12.6" fill="none" stroke="#5a5c5c" stroke-width="1.5" stroke-linecap="round"/><path d="M10.9 19.2 V26 Q10.9 28.1 13 28.1 H14.1 Q16.2 28.1 16.2 26 V25.4 A1.85 1.85 0 0 1 19.9 25.4 V26 Q19.9 28.1 22 28.1 H23.2 Q25.3 28.1 25.3 26 V19.2" fill="none" stroke="#5a5c5c" stroke-width="1.8" stroke-linecap="round"/></svg>
<svg class="s" style="left:8px;top:433px;" width="40" height="40" viewBox="0 0 40 40"><path d="M10.6 12 A9.3 9.3 0 1 1 10.6 24.6" fill="none" stroke="#5a5c5c" stroke-width="1.9" stroke-linecap="round"/><circle cx="10.7" cy="18.5" r="3" fill="none" stroke="#5a5c5c" stroke-width="1.8"/><path d="M13.8 18.3 H21.2 V20.8 M17.6 18.3 V20.9" fill="none" stroke="#5a5c5c" stroke-width="1.9"/></svg>
<svg class="s" style="left:8px;top:488px;" width="40" height="40" viewBox="0 0 40 40"><path d="M11 8.15 H25.9 Q26.85 8.15 26.85 9.1 V28 Q26.85 28.95 25.9 28.95 H11" fill="none" stroke="#5a5c5c" stroke-width="1.9" stroke-linecap="round"/><path d="M8.9 10.9 H11.3" fill="none" stroke="#5a5c5c" stroke-width="1.6" stroke-linecap="round"/><path d="M8.9 13.9 H11.3" fill="none" stroke="#5a5c5c" stroke-width="1.6" stroke-linecap="round"/><path d="M8.9 17 H11.3" fill="none" stroke="#5a5c5c" stroke-width="1.6" stroke-linecap="round"/><path d="M8.9 20 H11.3" fill="none" stroke="#5a5c5c" stroke-width="1.6" stroke-linecap="round"/><path d="M8.9 23.1 H11.3" fill="none" stroke="#5a5c5c" stroke-width="1.6" stroke-linecap="round"/><path d="M8.9 26.05 H11.3" fill="none" stroke="#5a5c5c" stroke-width="1.6" stroke-linecap="round"/><ellipse cx="19" cy="15.8" rx="2.05" ry="2.6" fill="#5a5c5c"/><path d="M14.2 22.7 V21.9 L17.9 20.1 L18.2 18.2 H19.8 L20.1 20.1 L23.9 21.9 V22.7 Z" fill="#5a5c5c"/></svg>
<svg class="s" style="left:8px;top:543px;" width="40" height="40" viewBox="0 0 40 40"><path d="M12.6 8.5 H23.2 L26.6 11.9 V27.4 Q26.6 28.7 25.3 28.7 H12.6 Q11.3 28.7 11.3 27.4 V9.8 Q11.3 8.5 12.6 8.5 Z" fill="none" stroke="#5a5c5c" stroke-width="1.4"/><path d="M23 8.7 V12.1 H26.4 Z" fill="#5a5c5c"/><path d="M8.5 11.4 V30.2 Q8.5 31.4 9.7 31.4 H24.8" fill="none" stroke="#5a5c5c" stroke-width="1.3" stroke-linecap="round"/><path d="M15.4 15.5 H19.6" fill="none" stroke="#5a5c5c" stroke-width="1.3" stroke-linecap="round"/><path d="M15.4 18.5 H22.5" fill="none" stroke="#5a5c5c" stroke-width="1.3" stroke-linecap="round"/><path d="M15.4 21.5 H22.5" fill="none" stroke="#5a5c5c" stroke-width="1.3" stroke-linecap="round"/><path d="M15.4 24.5 H22.5" fill="none" stroke="#5a5c5c" stroke-width="1.3" stroke-linecap="round"/></svg>
<svg class="s" style="left:8px;top:598px;" width="40" height="40" viewBox="0 0 40 40"><path d="M11.2 7.1 H27 Q27.7 7.1 27.7 7.8 V25.8 Q27.7 26.8 26.6 26.8 Q25.6 26.8 25.6 25.8 V14 L20.4 9.1 H11.2 Z" fill="#737575"/><path d="M8.2 10.3 H18.8 V13.3 Q18.8 15.3 20.8 15.3 H24 V29.1 Q24 29.9 23.2 29.9 H8.2 Q7.4 29.9 7.4 29.1 V11.1 Q7.4 10.3 8.2 10.3 Z" fill="#737575"/><path d="M20.3 11.4 L23.2 14 H21 Q20.3 14 20.3 13.3 Z" fill="#737575"/></svg>
<svg class="s" style="left:8px;top:653px;" width="40" height="40" viewBox="0 0 40 40"><rect x="5.95" y="10" width="23.1" height="19" fill="none" stroke="#696b6b" stroke-width="1.8"/><path d="M9.1 22.3 L13 19.2 V26.8 H9.1 Z M15.5 21.3 H19.6 V26.8 H15.5 Z M21.6 16.3 L25.5 15.4 V26.8 H21.6 Z" fill="#6d6f6f"/><path d="M8.3 21.1 L12 17.2 L17.8 19.4 L23.6 13.1" fill="none" stroke="#5a5c5c" stroke-width="1.3"/><path d="M22 12 L25 11.9 L24.8 14.9 Z" fill="#5a5c5c"/></svg>
<svg class="s" style="left:8px;top:708px;" width="40" height="40" viewBox="0 0 40 40"><path d="M6.3 19.6 A11.2 11.2 0 0 1 28.7 19.6" fill="none" stroke="#0b6fd1" stroke-width="1.2"/><ellipse cx="5.9" cy="19.6" rx="1.1" ry="3.2" fill="#0b6fd1"/><path d="M27.6 16.2 Q30 17.5 30 20 Q30 22.6 27.2 23.4 Q28.4 20 27.6 16.2 Z" fill="#0b6fd1"/><path d="M8.5 18.9 C9 13.2 13 10.9 17.6 10.9 C22.4 10.9 26 13.6 26.6 17.9 C24 17.8 22.2 16.6 21 14.6 C18.2 17.4 13.6 18.9 8.5 18.9 Z" fill="#0b6fd1"/><circle cx="13.9" cy="20.9" r="1.9" fill="#0b6fd1"/><circle cx="21" cy="20.9" r="1.9" fill="#0b6fd1"/><path d="M15.3 25.8 Q17.7 27.8 20.2 25.8" fill="none" stroke="#0b6fd1" stroke-width="1.5" stroke-linecap="round"/><path d="M6.6 22 C8 26.4 11.6 29.4 16.8 29.9" fill="none" stroke="#0b6fd1" stroke-width="1.4" stroke-linecap="round"/><ellipse cx="16.9" cy="30" rx="1" ry=".8" fill="#0b6fd1"/></svg>
<svg class="s" style="left:28px;top:760px;" width="40" height="40" viewBox="0 0 40 40"><path d="M25.85 26 V29.6 H10.35 V9.4 H20.6 L25.85 14.6 V17.8" fill="none" stroke="#5a5c5c" stroke-width="1.5"/><path d="M20.6 9.6 V14.5 H25.6" fill="none" stroke="#5a5c5c" stroke-width="1.4"/><circle cx="24.5" cy="22" r="3.8" fill="none" stroke="#5a5c5c" stroke-width="1.5"/><path d="M27.3 24.9 L30.6 28.1" fill="none" stroke="#5a5c5c" stroke-width="1.6" stroke-linecap="round"/><path d="M13.3 17 H20.6" fill="none" stroke="#5a5c5c" stroke-width="1.3"/><path d="M13.3 19.5 H18.4" fill="none" stroke="#5a5c5c" stroke-width="1.3"/><path d="M13.3 22 H18.4" fill="none" stroke="#5a5c5c" stroke-width="1.3"/><path d="M13.3 24.6 H18.4" fill="none" stroke="#5a5c5c" stroke-width="1.3"/></svg>
<svg class="s" style="left:28px;top:809px;" width="40" height="40" viewBox="0 0 40 40"><path d="M20.8 29.6 H10.2 V9.4 H22 L25.6 13 V18.2" fill="none" stroke="#fff" stroke-width="1.6"/><path d="M20.7 9.6 V12.6 Q20.7 13.6 21.7 13.6 H25.4" fill="none" stroke="#fff" stroke-width="1.5"/><circle cx="25.1" cy="24.1" r="5.3" fill="none" stroke="#fff" stroke-width="1.6"/><path d="M22.2 24.1 H28 M25.1 21.2 V27" fill="none" stroke="#fff" stroke-width="1.8"/></svg>
<svg class="s" style="left:28px;top:856px;" width="40" height="40" viewBox="0 0 40 40"><path d="M17.4 15 L27.6 24.6" fill="none" stroke="#5a5c5c" stroke-width="3.1"/><path d="M15.7 9.9 A3.3 3.3 0 1 1 12.7 13" fill="none" stroke="#5a5c5c" stroke-width="2.1" stroke-linecap="round"/><path d="M32.2 26.4 A3.3 3.3 0 1 0 29.2 29.3" fill="none" stroke="#5a5c5c" stroke-width="2.1" stroke-linecap="round"/><path d="M13.4 27.7 L20 22.1" fill="none" stroke="#5a5c5c" stroke-width="3.4" stroke-linecap="round"/><path d="M24.8 17 L29 12.8" fill="none" stroke="#5a5c5c" stroke-width="1.6" stroke-linecap="round"/><path d="M28.6 12.6 L31.4 10.5" fill="none" stroke="#5a5c5c" stroke-width="3.2" stroke-linecap="round"/></svg>
<svg class="s" style="left:6px;top:927px;" width="40" height="40" viewBox="0 0 40 40"><path d="M13.4 13.8 L25.1 9.3 V28 L13.4 23.4 Z" fill="none" stroke="#5a5c5c" stroke-width="1.3" stroke-linejoin="round"/><path d="M13.4 13.8 C9 13 6.4 15.6 6.4 18.6 C6.4 21.4 9 23.4 13.4 23.4" fill="none" stroke="#5a5c5c" stroke-width="1.3"/><path d="M25.5 15.3 Q28.8 16.4 28.8 18.8 Q28.8 21.2 25.5 22.6" fill="none" stroke="#5a5c5c" stroke-width="1.3"/><path d="M11.7 23.6 L13.6 30 Q14.4 31.6 16 31.5 Q17.8 31.2 17.9 29.4 L16.7 25" fill="none" stroke="#5a5c5c" stroke-width="1.3"/><path d="M18.2 14.9 L22.6 13.2" fill="none" stroke="#5a5c5c" stroke-width="1.1"/><path d="M29.6 14.4 L32.4 12.6 M31.3 18.7 H33.6 M29.6 23.1 L32.4 24.7" fill="none" stroke="#5a5c5c" stroke-width="1.5" stroke-linecap="round"/></svg>
<svg class="s" style="left:6px;top:983px;" width="40" height="40" viewBox="0 0 40 40"><path d="M12.5 19.9 V14.6 L18.7 8.4 H31 Q31.7 8.4 31.7 9.1 V31.8 Q31.7 32.5 31 32.5 H13.2 Q12.5 32.5 12.5 31.8 V30.3" fill="none" stroke="#5a5c5c" stroke-width="1.6"/><path d="M18.8 9 V13.6 Q18.8 14.6 17.8 14.6 H13" fill="none" stroke="#5a5c5c" stroke-width="1.5"/><circle cx="11.5" cy="25.3" r="3.4" fill="none" stroke="#5a5c5c" stroke-width="1.5"/><circle cx="21" cy="25.3" r="3.4" fill="none" stroke="#5a5c5c" stroke-width="1.5"/><path d="M14.7 24.2 Q16.25 22.8 17.8 24.2 M7.1 24.6 L8.2 24.4 M24.3 24.3 L25.4 24.1" fill="none" stroke="#5a5c5c" stroke-width="1.3"/><path d="M21 16.9 H28.6" fill="none" stroke="#8a8c8c" stroke-width="1.1"/><path d="M15.9 19.3 H28.6" fill="none" stroke="#8a8c8c" stroke-width="1.1"/><path d="M24.5 21.4 H28.6" fill="none" stroke="#8a8c8c" stroke-width="1.1"/><path d="M27.2 24.1 H28.6" fill="none" stroke="#8a8c8c" stroke-width="1.1"/><path d="M26 26.4 H28.6" fill="none" stroke="#8a8c8c" stroke-width="1.1"/><path d="M24.9 28.8 H28.6" fill="none" stroke="#8a8c8c" stroke-width="1.1"/></svg>
<svg class="s" style="left:110px;top:655px;" width="145" height="65" viewBox="0 0 145 65"><path d="M135.3 11 L24 51.6" stroke="#2f6df6" stroke-width="2.8" fill="none"/><path d="M13.3 55.5 L22.2 43.5 L28.8 58.2 Z" fill="#2f6df6"/></svg>
<div class="b" style="left:258.4px;top:477px;width:3.6px;height:433px;background:rgba(0,0,0,.245);border-radius:2px"></div>
<div class="b" style="left:264px;top:0px;width:1px;height:71px;background:#e4e5e6"></div>
</aside>
</div>
</body>
</html>
